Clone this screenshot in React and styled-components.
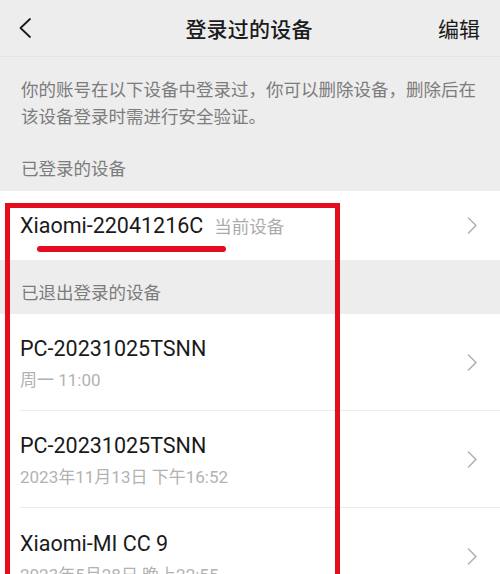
import React from 'react';
import styled, { createGlobalStyle } from 'styled-components';

const GlobalStyle = createGlobalStyle`
    html, body {
        margin: 0;
        padding: 0;
        background: #ededed;
    }
    body {
        font-family: "Noto Sans CJK SC", "Noto Sans", sans-serif;
        -webkit-font-smoothing: antialiased;
    }
`

const Page = styled.div`
    position: relative;
    width: 500px;
    height: 574px;
    overflow: hidden;
    background: #ededed;
`

const NavBar = styled.div`
    height: 56px;
    display: grid;
    grid-template-columns: 80px 1fr 80px;
    align-items: center;
    padding: 0 20px 0 18px;
    border-bottom: 1px solid #e4e4e4;
`

const BackButton = styled.div`
    display: flex;
    align-items: center;
    height: 100%;
`

const Title = styled.div`
    text-align: center;
    font-size: 21px;
    font-weight: 500;
    color: #1b1b1b;
    letter-spacing: 0.2px;
`

const Action = styled.div`
    text-align: right;
    font-size: 21px;
    color: #1b1b1b;
`

const Hint = styled.p`
    margin: 0;
    padding: 18px 20px 0 21px;
    font-size: 17.5px;
    line-height: 27px;
    color: #7c7c7c;
`

const SectionLabel = styled.div`
    padding: ${p => p.$top}px 21px ${p => p.$bottom}px;
    font-size: 17.5px;
    line-height: 24px;
    color: #7c7c7c;
`

const List = styled.div`
    background: #fff;
`

const Row = styled.div`
    padding-left: 20px;
`

const RowInner = styled.div`
    display: flex;
    align-items: center;
    height: ${p => p.$height}px;
    padding-right: 22px;
    border-bottom: ${p => (p.$last ? 'none' : '1px solid #ececec')};
    box-sizing: border-box;
`

const RowText = styled.div`
    flex: 1;
    display: flex;
    flex-direction: column;
    gap: 5px;
    padding-top: ${p => p.$shift || 0}px;
`

const NameLine = styled.div`
    display: flex;
    align-items: baseline;
    gap: 11px;
`

const DeviceName = styled.span`
    font-family: Roboto, "Noto Sans", "Noto Sans CJK SC", sans-serif;
    font-size: 21.5px;
    line-height: 28px;
    color: #1a1a1a;
`

const Tag = styled.span`
    font-size: 17.5px;
    color: #ababab;
`

const SubText = styled.span`
    font-family: Roboto, "Noto Sans CJK SC", sans-serif;
    font-size: 17px;
    line-height: 24px;
    color: #b2b2b2;
`

const Marker = styled.div`
    position: absolute;
    left: 5px;
    top: 203px;
    width: 335px;
    height: 420px;
    border: 5px solid #e30d1d;
    box-sizing: border-box;
    pointer-events: none;
`

const Underline = styled.div`
    position: absolute;
    left: 37px;
    top: 246px;
    width: 189px;
    height: 6px;
    border-radius: 3px;
    background: #e30d1d;
`

const Chevron = () => (
    <svg width="11" height="17" viewBox="0 0 11 17">
        <polyline points="1.5,1 9,8.5 1.5,16" fill="none" stroke="#b3b3b3" strokeWidth="1.6" strokeLinecap="round" strokeLinejoin="round" />
    </svg>
)

const BackIcon = () => (
    <svg width="14" height="22" viewBox="0 0 14 22">
        <polyline points="12,2 2.5,11 12,20" fill="none" stroke="#1b1b1b" strokeWidth="1.8" strokeLinecap="round" strokeLinejoin="round" />
    </svg>
)

const loggedOut = [
    { name: 'PC-20231025TSNN', time: '周一 11:00' },
    { name: 'PC-20231025TSNN', time: '2023年11月13日 下午16:52' },
    { name: 'Xiaomi-MI CC 9', time: '2023年5月28日 晚上22:55' },
]

export default function App() {
    return (
        <Page>
            <GlobalStyle />
            <NavBar>
                <BackButton><BackIcon /></BackButton>
                <Title>登录过的设备</Title>
                <Action>编辑</Action>
            </NavBar>

            <Hint>你的账号在以下设备中登录过，你可以删除设备，删除后在该设备登录时需进行安全验证。</Hint>

            <SectionLabel $top={27} $bottom={11}>已登录的设备</SectionLabel>
            <List>
                <Row>
                    <RowInner $height={69} $last>
                        <RowText>
                            <NameLine>
                                <DeviceName>Xiaomi-22041216C</DeviceName>
                                <Tag>当前设备</Tag>
                            </NameLine>
                        </RowText>
                        <Chevron />
                    </RowInner>
                </Row>
            </List>

            <SectionLabel $top={20} $bottom={10}>已退出登录的设备</SectionLabel>
            <List>
                {loggedOut.map((d, i) => (
                    <Row key={i}>
                        <RowInner $height={97} $last={i === loggedOut.length - 1}>
                            <RowText $shift={3}>
                                <DeviceName>{d.name}</DeviceName>
                                <SubText>{d.time}</SubText>
                            </RowText>
                            <Chevron />
                        </RowInner>
                    </Row>
                ))}
            </List>

            <Marker />
            <Underline />
        </Page>
    );
}
